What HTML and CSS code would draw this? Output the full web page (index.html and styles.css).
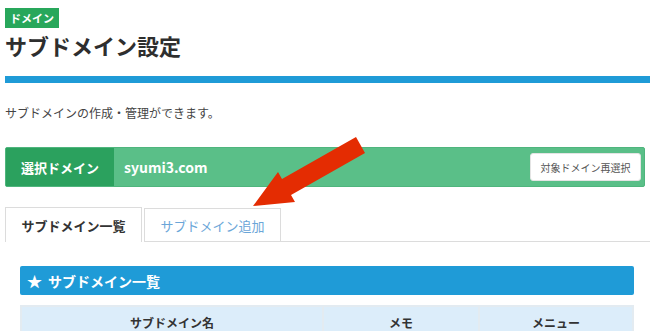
FILE: index.html
```html
<!DOCTYPE html>
<html lang="ja">
<head>
<meta charset="utf-8">
<link rel="stylesheet" href="styles.css">
</head>
<body>
<div class="page">
  <div class="head">
    <span class="badge">ドメイン</span>
    <h1 class="title">サブドメイン設定</h1>
  </div>
  <div class="rule"></div>
  <p class="desc">サブドメインの作成・管理ができます。</p>
  <div class="domainbar">
    <div class="domainlabel">選択ドメイン</div>
    <div class="domainname">syumi3.com</div>
    <button class="reselect">対象ドメイン再選択</button>
  </div>
  <div class="tabs">
    <div class="tab active">サブドメイン一覧</div>
    <div class="tab">サブドメイン追加</div>
    <div class="tabfill"></div>
  </div>
  <div class="section">
    <div class="sechead"><span class="star">★</span><span>サブドメイン一覧</span></div>
    <div class="thead">
      <div class="th c1">サブドメイン名</div>
      <div class="th c2">メモ</div>
      <div class="th c3">メニュー</div>
    </div>
  </div>
  <svg class="arrow" width="650" height="331" viewBox="0 0 650 331">
    <polygon points="253,206 278,172 282,179 356,137 365,153 291,195 295,202" fill="#e42c02"/>
  </svg>
</div>
</body>
</html>
```
FILE: styles.css
```css
html, body {
  margin: 0;
  padding: 0;
  background: #fff;
}
body {
  font-family: "Noto Sans CJK JP", "Noto Sans", sans-serif;
  color: #333;
  width: 650px;
  height: 331px;
  overflow: hidden;
}
.page {
  position: relative;
  padding-left: 5px;
}
.head {
  padding-top: 8px;
}
.badge {
  display: block;
  width: fit-content;
  background: #28a75b;
  color: #fff;
  font-size: 11px;
  font-weight: bold;
  line-height: 20px;
  height: 20px;
  padding: 0 5px;
}
.title {
  margin: 2px 0 0;
  font-size: 22px;
  line-height: 30px;
  font-weight: bold;
  color: #2e2e2e;
}
.rule {
  margin-top: 16px;
  height: 7px;
  background: #1f9bd7;
}
.desc {
  margin: 21px 0 0;
  font-size: 12px;
  line-height: 18px;
  color: #444;
}
.domainbar {
  margin: 25px 5px 0 0;
  height: 40px;
  display: flex;
  align-items: center;
  background: #5abf88;
  border: 1px solid #4fb57d;
  border-radius: 2px;
  box-sizing: border-box;
}
.domainlabel {
  width: 108px;
  height: 100%;
  background: #2ba15e;
  color: #fff;
  font-weight: bold;
  font-size: 13px;
  display: flex;
  align-items: center;
  justify-content: center;
  box-sizing: border-box;
}
.domainname {
  flex: 1;
  padding-left: 10px;
  color: #fff;
  font-weight: bold;
  font-size: 14px;
}
.reselect {
  margin-right: 3px;
  width: 111px;
  height: 28px;
  background: #fff;
  border: 1px solid #e4e4e4;
  border-radius: 3px;
  font-family: inherit;
  font-size: 10px;
  color: #555;
  padding: 0;
}
.tabs {
  margin-top: 20px;
  display: flex;
  align-items: flex-end;
  gap: 2px;
  height: 35px;
}
.tab {
  width: 137px;
  height: 34px;
  box-sizing: border-box;
  border: 1px solid #dcdcdc;
  display: flex;
  align-items: center;
  justify-content: center;
  font-size: 13px;
  color: #6ba6d8;
  background: #fff;
}
.tab.active {
  height: 35px;
  border-bottom: none;
  color: #333;
  font-weight: bold;
}
.tabfill {
  flex: 1;
  height: 0;
  border-bottom: 1px solid #dcdcdc;
  margin-left: -2px;
}
.section {
  padding: 24px 16px 0 15px;
}
.sechead {
  height: 29px;
  background: #1f9bd7;
  border-radius: 2px;
  color: #fff;
  font-weight: bold;
  font-size: 14px;
  display: flex;
  align-items: center;
  gap: 6px;
  padding-left: 7px;
}
.star {
  font-size: 15px;
}
.thead {
  margin-top: 10px;
  display: flex;
  background: #dcedfa;
  border: 2px solid #e3ebf1;
  border-bottom: none;
}
.th {
  height: 30px;
  display: flex;
  align-items: center;
  justify-content: center;
  font-size: 12px;
  font-weight: bold;
  color: #333;
}
.c1 { width: 300px; }
.c2 { width: 154px; border-left: 2px solid #e3ebf1; }
.c3 { flex: 1; border-left: 2px solid #e3ebf1; }
.arrow {
  position: absolute;
  left: 0;
  top: 0;
  pointer-events: none;
}
```
